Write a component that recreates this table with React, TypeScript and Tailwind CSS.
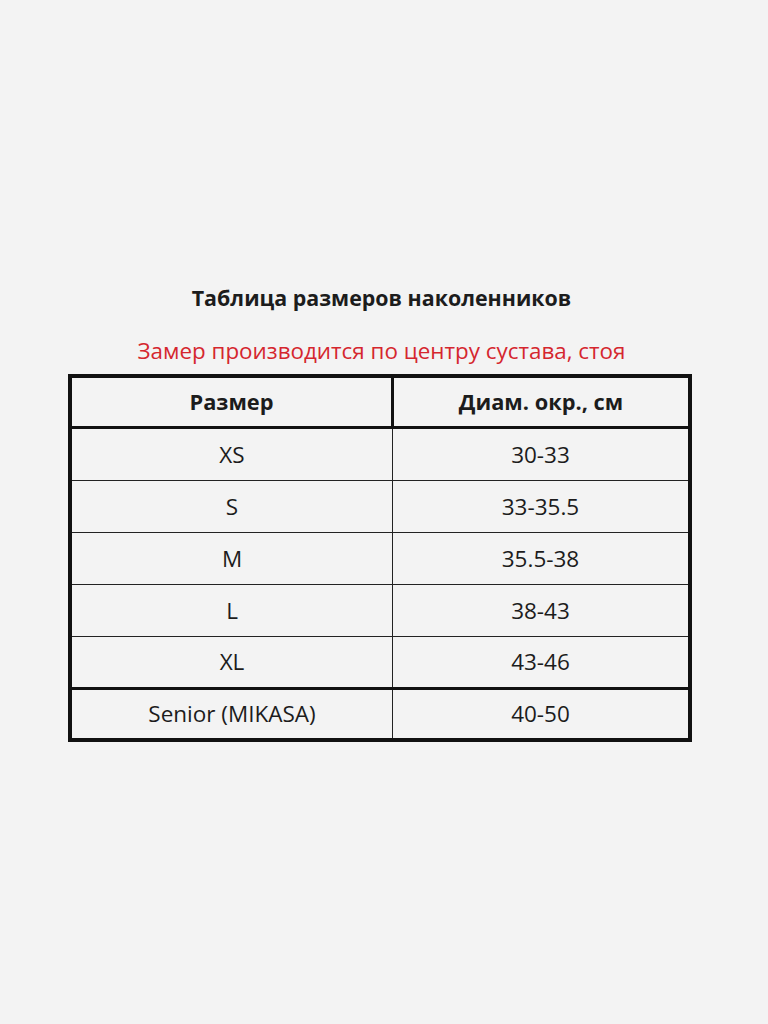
const rows = [
  { size: "XS", value: "30-33" },
  { size: "S", value: "33-35.5" },
  { size: "M", value: "35.5-38" },
  { size: "L", value: "38-43" },
  { size: "XL", value: "43-46" },
];

export default function App() {
  return (
    <main
      className="w-full min-h-screen bg-[#f3f3f3] flex flex-col items-center pt-[283px] text-[#1c1c1c]"
      style={{ fontFamily: '"Open Sans", "Noto Sans", sans-serif' }}
    >
      <h1 className="mr-[5px] h-[30px] leading-[30px] text-[21.4px] font-bold">
        Таблица размеров наколенников
      </h1>
      <p className="mr-[5px] mt-[23px] h-[30px] leading-[30px] text-[22.4px] text-[#d5262e]">
        Замер производится по центру сустава, стоя
      </p>

      {/* table */}
      <div className="mr-[8px] mt-[8px] w-[624px] border-4 border-[#111] flex flex-col text-[22.5px]">
        <div className="h-[51px] flex border-b-[3px] border-[#111] font-bold text-[21.8px]">
          <div className="w-[322px] border-r-[3px] border-[#111] flex items-center justify-center">
            Размер
          </div>
          <div className="flex-1 flex items-center justify-center">Диам. окр., см</div>
        </div>
        {rows.map((r, i) => (
          <div
            key={r.size}
            className={
              i === rows.length - 1
                ? "h-[53px] flex border-b-[3px] border-[#111]"
                : "h-[52px] flex border-b border-[#222]"
            }
          >
            <div className="w-[321px] border-r border-[#222] flex items-center justify-center">
              {r.size}
            </div>
            <div className="flex-1 flex items-center justify-center">{r.value}</div>
          </div>
        ))}
        <div className="h-[48px] flex">
          <div className="w-[321px] border-r border-[#222] flex items-center justify-center">
            Senior (MIKASA)
          </div>
          <div className="flex-1 flex items-center justify-center">40-50</div>
        </div>
      </div>
    </main>
  );
}
